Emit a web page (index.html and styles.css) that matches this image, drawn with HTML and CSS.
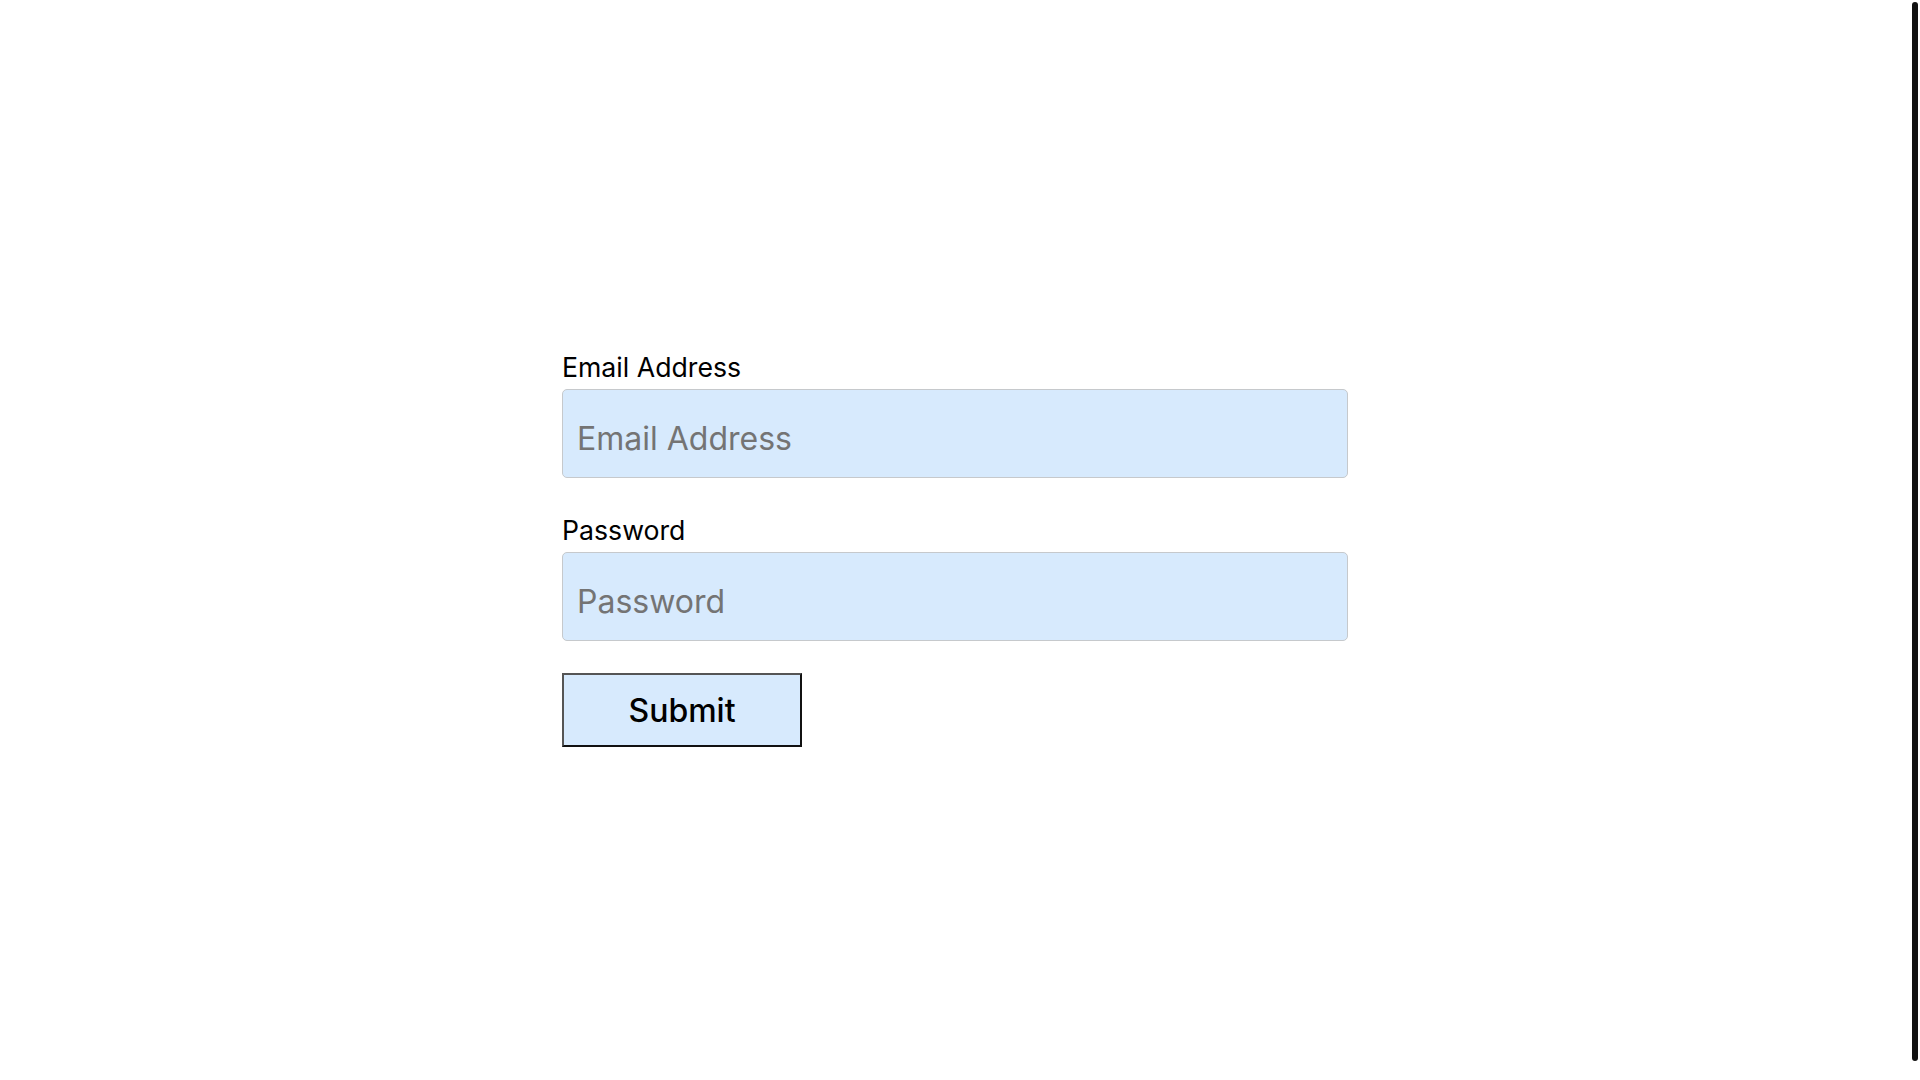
FILE: index.html
```html
<!DOCTYPE html>
<html lang="en">
  <head>
    <meta charset="UTF-8" />
    <meta name="viewport" content="width=device-width, initial-scale=1.0" />
    <title>Login</title>
    <link rel="stylesheet" href="styles.css">
  </head>
  <body>
    <main class="page">
      <form class="login">
        <div class="field">
          <label for="emailInput" class="field-label">Email Address</label>
          <input
            type="email"
            id="emailInput"
            placeholder="Email Address"
            class="field-input"
          />
        </div>
        <div class="field">
          <label for="passwordInput" class="field-label">Password</label>
          <input
            type="password"
            id="passwordInput"
            placeholder="Password"
            class="field-input"
          />
        </div>
        <button type="button" class="submit">Submit</button>
      </form>
    </main>
    <div class="scroll-thumb"></div>
  </body>
</html>
```

FILE: styles.css
```css
body {
  margin: 0;
  background-color: white;
  font-family: Inter, "Noto Sans", sans-serif;
  color: black;
}
.page {
  display: flex;
  justify-content: center;
  padding: 351px 10px 0 0;
}
.login {
  display: flex;
  flex-direction: column;
  align-items: flex-start;
  width: 786px;
}
.field {
  display: flex;
  flex-direction: column;
  gap: 6px;
  width: 100%;
  margin-bottom: 36px;
}
.field:last-of-type {
  margin-bottom: 32px;
}
.field-label {
  font-size: 26.67px;
  line-height: 32px;
}
.field-input {
  box-sizing: border-box;
  width: 100%;
  height: 89px;
  padding: 29px 14px 19px;
  font-family: inherit;
  font-size: 32px;
  line-height: 39px;
  background-color: #d7eafd;
  border: 1px solid #c6c9cc;
  border-radius: 5px;
  outline: none;
}
.field-input::placeholder {
  color: #747474;
}
.submit {
  box-sizing: border-box;
  width: 240px;
  height: 74px;
  font-family: inherit;
  font-size: 32px;
  font-weight: 500;
  color: black;
  background-color: #d7eafd;
  border: 2px solid;
  border-color: #555 #111 #111 #555;
  cursor: pointer;
}
.scroll-thumb {
  position: fixed;
  top: 2px;
  right: 2px;
  bottom: 19px;
  width: 6px;
  border-radius: 3px;
  background-color: #111;
}
```
